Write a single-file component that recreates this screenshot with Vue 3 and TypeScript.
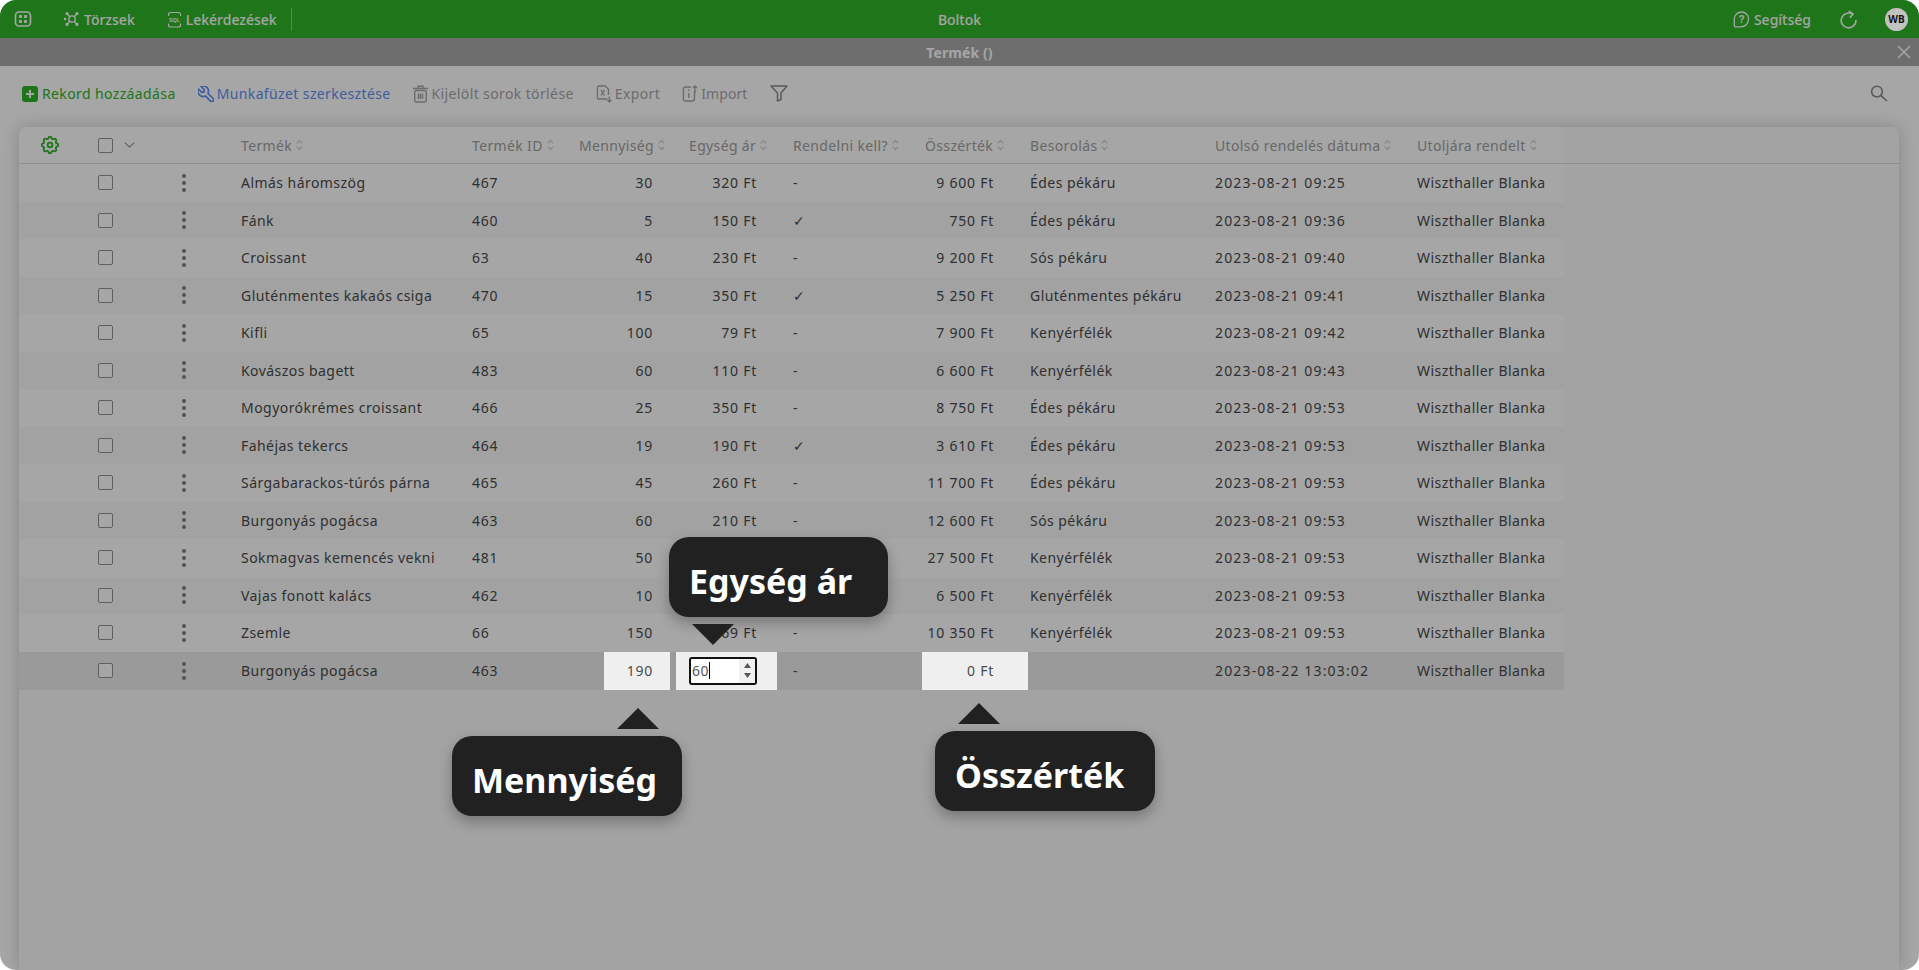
<script setup lang="ts">
interface Row {
  name: string
  id: string
  qty: string
  price: string
  reorder: string
  total: string
  cat: string
  date: string
}

const rows: Row[] = [
  { name: 'Almás háromszög', id: '467', qty: '30', price: '320 Ft', reorder: '-', total: '9 600 Ft', cat: 'Édes pékáru', date: '2023-08-21 09:25' },
  { name: 'Fánk', id: '460', qty: '5', price: '150 Ft', reorder: '✓', total: '750 Ft', cat: 'Édes pékáru', date: '2023-08-21 09:36' },
  { name: 'Croissant', id: '63', qty: '40', price: '230 Ft', reorder: '-', total: '9 200 Ft', cat: 'Sós pékáru', date: '2023-08-21 09:40' },
  { name: 'Gluténmentes kakaós csiga', id: '470', qty: '15', price: '350 Ft', reorder: '✓', total: '5 250 Ft', cat: 'Gluténmentes pékáru', date: '2023-08-21 09:41' },
  { name: 'Kifli', id: '65', qty: '100', price: '79 Ft', reorder: '-', total: '7 900 Ft', cat: 'Kenyérfélék', date: '2023-08-21 09:42' },
  { name: 'Kovászos bagett', id: '483', qty: '60', price: '110 Ft', reorder: '-', total: '6 600 Ft', cat: 'Kenyérfélék', date: '2023-08-21 09:43' },
  { name: 'Mogyorókrémes croissant', id: '466', qty: '25', price: '350 Ft', reorder: '-', total: '8 750 Ft', cat: 'Édes pékáru', date: '2023-08-21 09:53' },
  { name: 'Fahéjas tekercs', id: '464', qty: '19', price: '190 Ft', reorder: '✓', total: '3 610 Ft', cat: 'Édes pékáru', date: '2023-08-21 09:53' },
  { name: 'Sárgabarackos-túrós párna', id: '465', qty: '45', price: '260 Ft', reorder: '-', total: '11 700 Ft', cat: 'Édes pékáru', date: '2023-08-21 09:53' },
  { name: 'Burgonyás pogácsa', id: '463', qty: '60', price: '210 Ft', reorder: '-', total: '12 600 Ft', cat: 'Sós pékáru', date: '2023-08-21 09:53' },
  { name: 'Sokmagvas kemencés vekni', id: '481', qty: '50', price: '550 Ft', reorder: '-', total: '27 500 Ft', cat: 'Kenyérfélék', date: '2023-08-21 09:53' },
  { name: 'Vajas fonott kalács', id: '462', qty: '10', price: '650 Ft', reorder: '-', total: '6 500 Ft', cat: 'Kenyérfélék', date: '2023-08-21 09:53' },
  { name: 'Zsemle', id: '66', qty: '150', price: '69 Ft', reorder: '-', total: '10 350 Ft', cat: 'Kenyérfélék', date: '2023-08-21 09:53' },
]

const headers: { label: string }[] = [
  { label: 'Termék' },
  { label: 'Termék ID' },
  { label: 'Mennyiség' },
  { label: 'Egység ár' },
  { label: 'Rendelni kell?' },
  { label: 'Összérték' },
  { label: 'Besorolás' },
  { label: 'Utolsó rendelés dátuma' },
  { label: 'Utoljára rendelt' },
]
</script>

<template>
  <div class="app">
    <header class="topbar">
      <div class="top-left">
        <svg class="ic-grid" width="18" height="16" viewBox="0 0 18 16" fill="none" stroke="currentColor" stroke-width="1.6">
          <rect x="1.5" y="1" width="15" height="14" rx="3.5" />
          <rect x="5" y="4" width="3" height="3" rx="1" fill="currentColor" stroke="none" />
          <rect x="10" y="4" width="3" height="3" rx="1" fill="currentColor" stroke="none" />
          <rect x="5" y="9" width="3" height="3" rx="1" fill="currentColor" stroke="none" />
          <rect x="10" y="9" width="3" height="3" rx="1" fill="currentColor" stroke="none" />
        </svg>
        <span class="nav first">
          <svg width="16" height="16" viewBox="0 0 16 16" fill="none" stroke="currentColor" stroke-width="1.3">
            <circle cx="8" cy="8" r="3.2" />
            <path d="M5.6 5.6 3.4 3M10.4 5.6 12.6 3M5.6 10.4 3.4 13M10.4 10.4 12.6 13" />
            <circle cx="3" cy="2.6" r=".9" fill="currentColor" />
            <circle cx="13" cy="2.6" r=".9" fill="currentColor" />
            <circle cx="3" cy="13.4" r=".9" fill="currentColor" />
            <circle cx="13" cy="13.4" r=".9" fill="currentColor" />
            <circle cx="1" cy="8" r=".7" fill="currentColor" />
          </svg>
          Törzsek
        </span>
        <span class="nav second">
          <svg width="15" height="17" viewBox="0 0 15 17" fill="none" stroke="currentColor" stroke-width="1.2">
            <path d="M1.5 5V3.5a2 2 0 0 1 2-2h8a2 2 0 0 1 2 2V5M1.5 12.5V14a2 2 0 0 0 2 2h8a2 2 0 0 0 2-2v-1.5" />
            <text x="7.5" y="10.8" font-size="5.4" font-weight="700" fill="currentColor" stroke="none" text-anchor="middle" font-family="Liberation Sans, sans-serif">SQL</text>
          </svg>
          Lekérdezések
        </span>
        <span class="divider"></span>
      </div>
      <div class="top-title">Boltok</div>
      <div class="top-right">
        <span class="nav help">
          <svg width="17" height="17" viewBox="0 0 17 17" fill="none" stroke="currentColor" stroke-width="1.3">
            <path d="M8.5 1A7 7 0 0 1 15.5 8 7.5 7.5 0 0 1 8 15.8H2.6A1.3 1.3 0 0 1 1.3 14.5V8A7.2 7.2 0 0 1 8.5 1Z" />
            <text x="8.5" y="12" font-size="10" font-weight="700" fill="currentColor" stroke="none" text-anchor="middle" font-family="Liberation Sans, sans-serif">?</text>
          </svg>
          Segítség
        </span>
        <svg class="refresh" width="19" height="19" viewBox="0 0 19 19" fill="none" stroke="currentColor" stroke-width="1.6">
          <path d="M13.6 4.2A7.4 7.4 0 1 0 17 10" />
          <path d="M9.8 1 14 4.2 10.8 7.6" />
        </svg>
        <span class="avatar">WB</span>
      </div>
    </header>

    <div class="titlebar">
      <span>Termék ()</span>
      <svg class="close" width="14" height="14" viewBox="0 0 14 14" stroke="currentColor" stroke-width="1.5">
        <path d="M1 1 13 13M13 1 1 13" />
      </svg>
    </div>

    <div class="toolbar">
      <button class="tool add">
        <svg width="16" height="16" viewBox="0 0 16 16">
          <rect width="16" height="16" rx="3" fill="currentColor" />
          <path d="M8 4v8M4 8h8" stroke="#fff" stroke-width="2" />
        </svg>
        Rekord hozzáadása
      </button>
      <button class="tool edit">
        <svg width="16" height="16" viewBox="3 3 18.5 18.5" fill="none" stroke="currentColor" stroke-width="1.9" stroke-linejoin="round" stroke-linecap="round">
          <path d="M7 10h3v-3l-3.5 -3.5a6 6 0 0 1 8 8l6 6a2 2 0 0 1 -3 3l-6 -6a6 6 0 0 1 -8 -8l3.5 3.5" />
        </svg>
        Munkafüzet szerkesztése
      </button>
      <button class="tool del">
        <svg width="17" height="18" viewBox="0 0 17 18" fill="none" stroke="currentColor" stroke-width="1.4">
          <path d="M1 3.5h15M6 3V1.3h5V3" />
          <rect x="2.7" y="5.5" width="11.6" height="11.5" rx="1.6" />
          <path d="M6.5 8.5v5.5M8.5 8.5v5.5M10.5 8.5v5.5" />
        </svg>
        Kijelölt sorok törlése
      </button>
      <button class="tool exp">
        <svg width="16" height="18" viewBox="0 0 16 18" fill="none" stroke="currentColor" stroke-width="1.3">
          <path d="M11.5 14H3a1.6 1.6 0 0 1-1.6-1.6V2.6A1.6 1.6 0 0 1 3 1h6.2l3.3 3.3V10" />
          <path d="M5 5l3.4 5.5M8.4 5 5 10.5" />
          <path d="M13.4 11.5V17M11.4 15l2 2 2-2" />
        </svg>
        Export
      </button>
      <button class="tool imp">
        <svg width="16" height="17" viewBox="0 0 16 17" fill="none" stroke="currentColor" stroke-width="1.4">
          <path d="M9 2H3.4A2 2 0 0 0 1.4 4v10a2 2 0 0 0 2 2H10a2.5 2.5 0 0 0 2.5-2.5V6" />
          <path d="M13 8V1M11 3l2-2 2 2" />
          <path d="M6.8 8v5" />
          <circle cx="6.8" cy="5.2" r=".9" fill="currentColor" stroke="none" />
        </svg>
        Import
      </button>
      <svg class="filter" width="18" height="17" viewBox="0 0 18 17" fill="none" stroke="currentColor" stroke-width="1.5" stroke-linejoin="round">
        <path d="M1 1h16l-6 7v6.5L7.5 16V8Z" />
      </svg>
      <svg class="search" width="18" height="17" viewBox="0 0 18 17" fill="none" stroke="currentColor" stroke-width="1.6">
        <circle cx="7" cy="6.6" r="5.4" />
        <path d="M11 10.6 17 16" />
      </svg>
    </div>

    <main class="card">
      <div class="cols head">
        <div class="cell gear-cell">
          <svg width="22" height="22" viewBox="0 0 24 24" fill="none" stroke="currentColor" stroke-width="2" stroke-linejoin="round" stroke-linecap="round">
            <path d="M10.325 4.317c.426 -1.756 2.924 -1.756 3.35 0a1.724 1.724 0 0 0 2.573 1.066c1.543 -.94 3.31 .826 2.37 2.37a1.724 1.724 0 0 0 1.065 2.572c1.756 .426 1.756 2.924 0 3.35a1.724 1.724 0 0 0 -1.066 2.573c.94 1.543 -.826 3.31 -2.37 2.37a1.724 1.724 0 0 0 -2.572 1.065c-.426 1.756 -2.924 1.756 -3.35 0a1.724 1.724 0 0 0 -2.573 -1.066c-1.543 .94 -3.31 -.826 -2.37 -2.37a1.724 1.724 0 0 0 -1.065 -2.572c-1.756 -.426 -1.756 -2.924 0 -3.35a1.724 1.724 0 0 0 1.066 -2.573c-.94 -1.543 .826 -3.31 2.37 -2.37c1 .608 2.296 .07 2.572 -1.065z" />
            <circle cx="12" cy="12" r="2.6" />
          </svg>
        </div>
        <div class="cell check-cell">
          <span class="check"></span>
          <svg class="chev" width="11" height="6" viewBox="0 0 11 6" fill="none" stroke="currentColor" stroke-width="1.1"><path d="M.7.7 5.5 5 10.3.7" /></svg>
        </div>
        <div class="cell"></div>
        <div v-for="h in headers" :key="h.label" class="cell th">
          {{ h.label }}
          <svg class="sort" width="7" height="12" viewBox="0 0 7 12" fill="none" stroke="currentColor" stroke-width="1.1" stroke-linecap="round" stroke-linejoin="round">
            <path d="M1 4 3.5 1.5 6 4M1 8l2.5 2.5L6 8" />
          </svg>
        </div>
      </div>

      <div v-for="r in rows" :key="r.name + r.date" class="cols row">
        <div class="cell"></div>
        <div class="cell check-cell"><span class="check"></span></div>
        <div class="cell kebab-cell"><span class="kebab"><i></i><i></i><i></i></span></div>
        <div class="cell">{{ r.name }}</div>
        <div class="cell digits">{{ r.id }}</div>
        <div class="cell num digits">{{ r.qty }}</div>
        <div class="cell num digits">{{ r.price }}</div>
        <div class="cell">{{ r.reorder }}</div>
        <div class="cell num digits">{{ r.total }}</div>
        <div class="cell">{{ r.cat }}</div>
        <div class="cell date">{{ r.date }}</div>
        <div class="cell">Wiszthaller Blanka</div>
      </div>

      <div class="cols row active">
        <div class="cell"></div>
        <div class="cell check-cell"><span class="check"></span></div>
        <div class="cell kebab-cell"><span class="kebab"><i></i><i></i><i></i></span></div>
        <div class="cell">Burgonyás pogácsa</div>
        <div class="cell digits">463</div>
        <div class="cell num digits spot spot-qty">190</div>
        <div class="cell spot spot-price">
          <span class="field">
            <span class="field-text">60<i class="caret"></i></span>
            <span class="spin">
              <svg width="7" height="5" viewBox="0 0 7 5"><path d="M3.5 0 7 5H0Z" fill="#555" /></svg>
              <svg width="7" height="5" viewBox="0 0 7 5"><path d="M3.5 5 0 0h7Z" fill="#555" /></svg>
            </span>
          </span>
        </div>
        <div class="cell">-</div>
        <div class="cell num digits spot spot-total">0 Ft</div>
        <div class="cell"></div>
        <div class="cell date">2023-08-22 13:03:02</div>
        <div class="cell">Wiszthaller Blanka</div>
      </div>
    </main>

    <div class="mask"></div>

    <div class="tip tip-price">Egység ár</div>
    <div class="arrow arrow-down arrow-price"></div>
    <div class="arrow arrow-up arrow-qty"></div>
    <div class="tip tip-qty">Mennyiség</div>
    <div class="arrow arrow-up arrow-total"></div>
    <div class="tip tip-total">Összérték</div>
  </div>
</template>

<style scoped>
.app {
  position: relative;
  width: 1919px;
  height: 970px;
  overflow: hidden;
  border-radius: 16px;
  background: #fff;
  display: flex;
  flex-direction: column;
  font-family: "Noto Sans", sans-serif;
  font-size: 14px;
  color: #333;
}

.topbar {
  height: 38px;
  flex: none;
  background: #30b427;
  color: #fff;
  display: grid;
  grid-template-columns: 1fr auto 1fr;
  align-items: center;
}
.top-left,
.top-right {
  display: flex;
  align-items: center;
}
.ic-grid {
  margin-left: 14px;
}
.nav {
  display: inline-flex;
  align-items: center;
  gap: 4px;
  font-weight: 500;
}
.nav.first {
  margin-left: 32px;
}
.nav.second {
  margin-left: 32px;
}
.divider {
  width: 1px;
  height: 23px;
  margin-left: 14px;
  background: rgba(255, 255, 255, .45);
}
.top-title {
  font-weight: 500;
  font-size: 14px;
}
.top-right {
  justify-content: flex-end;
  padding-right: 11px;
}
.refresh {
  margin-left: 28px;
}
.avatar {
  position: relative;
  z-index: 20;
  width: 23px;
  height: 23px;
  margin-left: 27px;
  border-radius: 50%;
  background: #c2c2c2;
  color: #111;
  font-size: 10px;
  font-weight: 700;
  display: flex;
  align-items: center;
  justify-content: center;
}

.titlebar {
  position: relative;
  height: 28px;
  flex: none;
  background: #aaa;
  color: #fff;
  font-weight: 700;
  display: flex;
  align-items: center;
  justify-content: center;
  font-size: 14px;
  letter-spacing: .1px;
}
.close {
  position: absolute;
  right: 8px;
  top: 7px;
}

.toolbar {
  height: 61px;
  flex: none;
  display: flex;
  align-items: center;
  padding: 0 31px 6px 22px;
  box-sizing: border-box;
}
.tool {
  display: inline-flex;
  align-items: center;
  gap: 3px;
  padding: 0;
  margin-right: 22px;
  border: 0;
  background: none;
  font: inherit;
  color: #a6a6a6;
  letter-spacing: .38px;
}
.tool.add { color: #30b427; gap: 4px; }
.tool.edit { color: #5f90f5; margin-right: 21px; }
.tool.imp { letter-spacing: .1px; }
.filter { color: #8a8a8a; }
.search { color: #8a8a8a; margin-left: auto; }

.card {
  flex: 1;
  margin: 0 20px 0 19px;
  background: #fafafa;
  border-radius: 8px 8px 0 0;
  box-shadow: 0 0 18px rgba(0, 0, 0, .2);
}

.cols {
  display: grid;
  grid-template-columns: 63px 86px 57px 231px 107px 110px 104px 132px 105px 185px 202px 163px;
  width: 1545px;
}
.head {
  height: 36px;
  width: 100%;
  border-bottom: 1px solid #dcdcdc;
  border-radius: 8px 8px 0 0;
  color: #a0a0a0;
  background: linear-gradient(#fff, #fff) no-repeat;
  background-size: 1545px 100%;
}
.cell {
  display: flex;
  align-items: center;
  padding-left: 16px;
  white-space: nowrap;
  min-width: 0;
  letter-spacing: .45px;
}
.digits {
  letter-spacing: .75px;
}
.date {
  letter-spacing: 1.15px;
}
.gear-cell {
  padding-left: 20px;
  color: #30b427;
}
.check-cell {
  gap: 11px;
}
.check {
  width: 15px;
  height: 15px;
  box-sizing: border-box;
  border: 1.5px solid #929292;
  border-radius: 2px;
  background: #fff;
}
.chev {
  color: #929292;
}
.kebab-cell {
  padding-left: 14px;
}
.kebab {
  display: flex;
  flex-direction: column;
  gap: 3px;
}
.kebab i {
  width: 4px;
  height: 4px;
  border-radius: 50%;
  background: #808080;
}
.th {
  gap: 4px;
  letter-spacing: .35px;
}
.sort {
  color: #d0d0d0;
  flex: none;
}
.row {
  height: 37.5px;
  color: #4a4a4a;
  background: #fff;
}
.row:nth-child(odd) {
  background: #f9f9f9;
}
.row.active {
  height: 38.5px;
  background: #ededed;
}
.num {
  justify-content: flex-end;
  padding: 0 20px 0 0;
}

.spot {
  position: relative;
  z-index: 20;
}
.spot::before {
  content: "";
  position: absolute;
  top: 0;
  bottom: 0;
  background: #efefef;
  z-index: -1;
}
.spot-qty::before { left: 41px; right: 3px; }
.spot-total::before { left: 13px; right: -14px; }
.spot-price {
  padding-left: 16px;
}
.spot-price::before { left: 3px; right: 0; }

.field {
  width: 68px;
  height: 28px;
  box-sizing: border-box;
  border: 2px solid #111;
  border-radius: 3px;
  background: #fff;
  display: flex;
  align-items: stretch;
  overflow: hidden;
}
.field-text {
  flex: 1;
  display: flex;
  align-items: center;
  padding-left: 1px;
  color: #555;
}
.caret {
  width: 1px;
  height: 17px;
  background: #000;
}
.spin {
  width: 16px;
  background: #f1f1f1;
  display: flex;
  flex-direction: column;
  align-items: center;
  justify-content: center;
  gap: 5px;
}

.mask {
  position: absolute;
  inset: 0;
  z-index: 10;
  background: rgba(0, 0, 0, .35);
}

.tip {
  position: absolute;
  z-index: 30;
  box-sizing: border-box;
  height: 80px;
  padding: 8px 0 0 20px;
  border-radius: 20px;
  background: #212121;
  color: #fff;
  font-size: 34px;
  font-weight: 700;
  display: flex;
  align-items: center;
  box-shadow: 0 6px 14px rgba(0, 0, 0, .28);
}
.tip-price { left: 669px; top: 537px; width: 219px; }
.tip-qty { left: 452px; top: 736px; width: 230px; }
.tip-total { left: 935px; top: 731px; width: 220px; }

.arrow {
  position: absolute;
  z-index: 30;
  width: 0;
  height: 0;
  border-left: 21px solid transparent;
  border-right: 21px solid transparent;
}
.arrow-up { border-bottom: 21px solid #212121; }
.arrow-down { border-top: 21px solid #212121; }
.arrow-price { left: 692px; top: 624px; }
.arrow-qty { left: 617px; top: 708px; }
.arrow-total { left: 958px; top: 703px; }
</style>

<style>
body {
  background: #fff;
}
</style>
